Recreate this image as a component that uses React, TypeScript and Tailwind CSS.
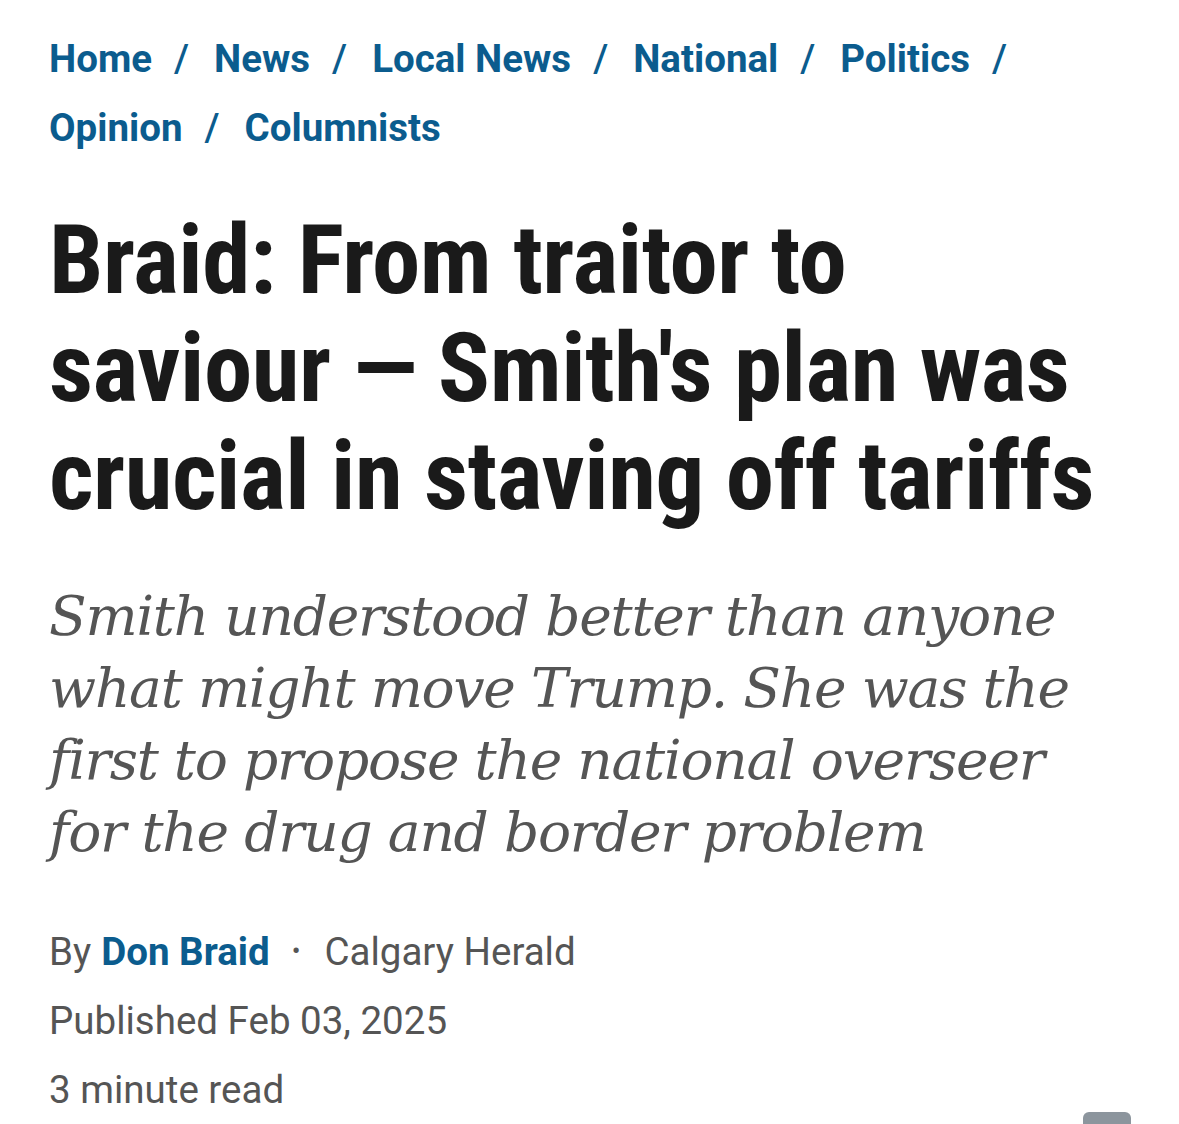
import React from "react";

const crumbs = ["Home", "News", "Local News", "National", "Politics", "Opinion", "Columnists"];

const App: React.FC = () => {
  return (
    <div className="w-[1179px] h-[1124px] overflow-hidden bg-white relative">
      <div className="pl-[49px] pr-[40px] pt-[24px]">
        {/* BREADCRUMB */}
        <nav className="flex flex-wrap font-['Roboto',sans-serif] text-[38.5px] leading-[69px] font-bold text-[#0b5c8e]">
          {crumbs.map((c, i) => (
            <span key={c} className="flex items-center">
              <span>{c}</span>
              {i < crumbs.length - 1 && <span className="ml-[22px] mr-[25px] font-medium">/</span>}
            </span>
          ))}
        </nav>

        {/* HEADLINE */}
        <h1 className="mt-[44px] font-['Roboto_Condensed','Roboto',sans-serif] [font-stretch:75%] font-bold text-[97px] leading-[108px] text-[#1a1a1a] tracking-[-0.5px]">
          Braid: From traitor to saviour — Smith's plan was crucial in staving off tariffs
        </h1>

        {/* DECK */}
        <p className="mt-[50px] pr-[25px] font-['DejaVu_Serif',serif] italic text-[55px] leading-[72px] tracking-[-1.2px] text-[#555555]">
          Smith understood better than anyone what might move Trump. She was the first to propose the national overseer for the drug and border problem
        </p>

        {/* BYLINE */}
        <div className="mt-[49px] font-['Roboto',sans-serif] text-[38.5px] leading-[69px] text-[#555555]">
          <div className="flex items-center">
            <span>By</span>
            <span className="ml-[10px] font-bold text-[#0b5c8e]">Don Braid</span>
            <span className="ml-[22px] mr-[24px] text-[26px]">•</span>
            <span>Calgary Herald</span>
          </div>
          <div>Published Feb 03, 2025</div>
          <div>3 minute read</div>
        </div>
      </div>

      {/* SCROLL HANDLE */}
      <div className="absolute left-[1083px] top-[1112px] w-[48px] h-[20px] rounded-t-[6px] bg-[#8c959d]" />
    </div>
  );
};

export default App;
